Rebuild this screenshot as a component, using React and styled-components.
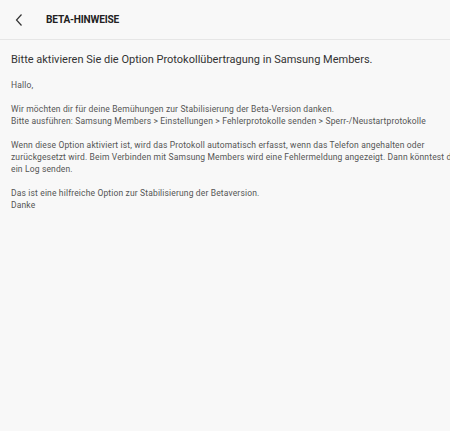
import React from "react";
import styled, { createGlobalStyle } from "styled-components";

const Global = createGlobalStyle`
    html, body {
        margin: 0;
        padding: 0;
        background: #f8f8f8;
        overflow: hidden;
    }
    body {
        font-family: Roboto, "Noto Sans", sans-serif;
    }
`;

const Page = styled.div`
    width: 450px;
    height: 431px;
    overflow: hidden;
    background: #f8f8f8;
`;

const Header = styled.div`
    height: 40px;
    display: flex;
    align-items: center;
    border-bottom: 1px solid #e6e6e6;
    box-sizing: border-box;
`;

const BackBtn = styled.button`
    width: 46px;
    height: 40px;
    border: none;
    background: none;
    padding: 0 0 0 14px;
    display: flex;
    align-items: center;
    cursor: pointer;
`;

const Title = styled.h1`
    margin: 0;
    font-size: 11px;
    font-weight: 700;
    color: #222;
    letter-spacing: -0.2px;
    transform: scaleX(0.92);
    transform-origin: left center;
`;

const Content = styled.div`
    width: 480px;
    padding: 12px 11px;
    box-sizing: border-box;
`;

const Heading = styled.h2`
    margin: 0 0 11px;
    font-size: 11px;
    font-weight: 400;
    color: #333;
    line-height: 16px;
`;

const Para = styled.p`
    margin: 0 0 12px;
    font-size: 8.5px;
    line-height: 12px;
    color: #555;
    letter-spacing: 0.15px;
    white-space: pre-line;
`;

const App = () => {
    return (
        <Page>
            <Global />
            <Header>
                <BackBtn>
                    <svg width="10" height="14" viewBox="0 0 10 14">
                        <path d="M7.5 1.5 L2.5 7 L7.5 12.5" fill="none" stroke="#333" strokeWidth="1.2" />
                    </svg>
                </BackBtn>
                <Title>BETA-HINWEISE</Title>
            </Header>
            <Content>
                <Heading>Bitte aktivieren Sie die Option Protokollübertragung in Samsung Members.</Heading>
                <Para>Hallo,</Para>
                <Para>{"Wir möchten dir für deine Bemühungen zur Stabilisierung der Beta-Version danken.\nBitte ausführen: Samsung Members > Einstellungen > Fehlerprotokolle senden > Sperr-/Neustartprotokolle"}</Para>
                <Para>Wenn diese Option aktiviert ist, wird das Protokoll automatisch erfasst, wenn das Telefon angehalten oder zurückgesetzt wird. Beim Verbinden mit Samsung Members wird eine Fehlermeldung angezeigt. Dann könntest du ein Log senden.</Para>
                <Para>{"Das ist eine hilfreiche Option zur Stabilisierung der Betaversion.\nDanke"}</Para>
            </Content>
        </Page>
    );
};

export default App;
